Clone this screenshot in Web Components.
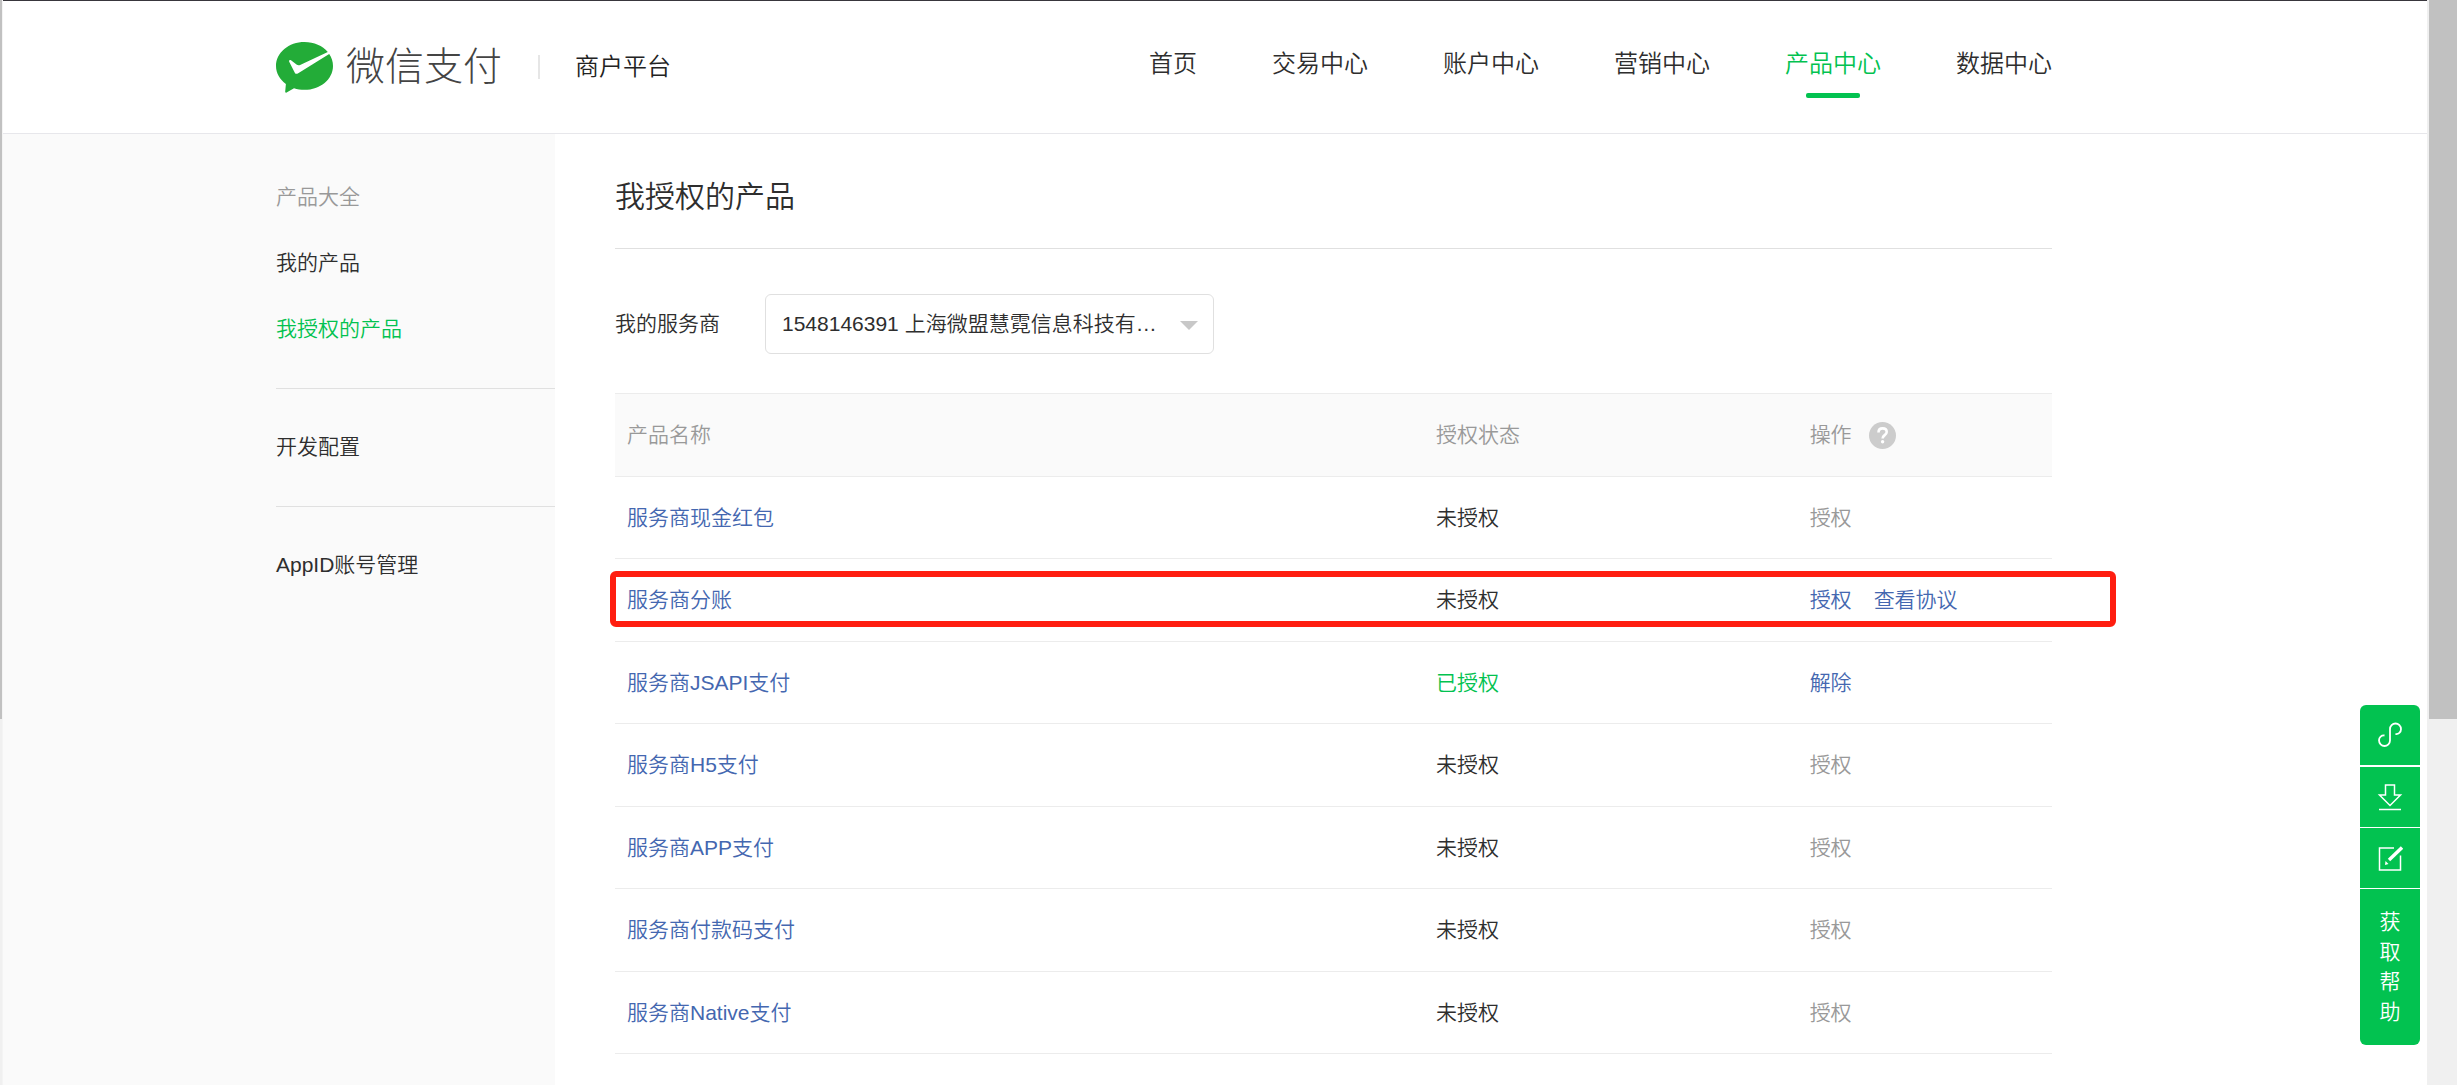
<!DOCTYPE html>
<html lang="zh-CN">
<head>
<meta charset="utf-8">
<meta name="viewport" content="width=device-width, initial-scale=1">
<title>微信支付 商户平台</title>
<style>
  :root {
    --green: #02c250;
    --link: #4467b0;
    --text: #2e2e2e;
    --muted: #999;
    --line: #e0e0e0;
    --soft: #ececec;
    --panel: #fafafa;
    --left: 273px;
    --right: 375px;
  }
  html, body { height: 100%; margin: 0; }
  body {
    background: #fff;
    color: var(--text);
    font: 350 21px/30px "Liberation Sans", "Noto Sans CJK SC", sans-serif;
    overflow: hidden;
  }
</style>
</head>
<body>
<pay-window>
  <pay-header>
    <pay-logo slot="brand"></pay-logo>
    <pay-nav-item>首页</pay-nav-item>
    <pay-nav-item>交易中心</pay-nav-item>
    <pay-nav-item>账户中心</pay-nav-item>
    <pay-nav-item>营销中心</pay-nav-item>
    <pay-nav-item active>产品中心</pay-nav-item>
    <pay-nav-item>数据中心</pay-nav-item>
  </pay-header>
  <pay-body>
    <pay-sidebar slot="side">
      <pay-side-group>
        <pay-side-item kind="muted">产品大全</pay-side-item>
        <pay-side-item>我的产品</pay-side-item>
        <pay-side-item kind="active">我授权的产品</pay-side-item>
      </pay-side-group>
      <pay-side-group>
        <pay-side-item>开发配置</pay-side-item>
      </pay-side-group>
      <pay-side-group>
        <pay-side-item>AppID账号管理</pay-side-item>
      </pay-side-group>
    </pay-sidebar>
    <pay-heading>我授权的产品</pay-heading>
    <pay-provider-select></pay-provider-select>
    <pay-product-table></pay-product-table>
  </pay-body>
</pay-window>
<pay-toolbar></pay-toolbar>

<script>
const define = (name, html, setup) => {
  const template = document.createElement('template');
  template.innerHTML = html;
  customElements.define(name, class extends HTMLElement {
    constructor() {
      super();
      this.attachShadow({ mode: 'open' }).append(template.content.cloneNode(true));
    }
    connectedCallback() {
      if (setup) setup(this, this.shadowRoot);
    }
  });
};

define('pay-window', `
  <style>
    :host { display: flex; height: 100vh; }
    .edge { flex: 0 0 2px; background: #f0f0f0; border-right: 1px solid #f4f4f4; }
    .page { flex: 1; min-width: 0; display: flex; flex-direction: column; border-top: 1px solid #38363c; box-sizing: border-box; }
    .track { flex: 0 0 28px; padding-left: 2px; background: #f0f0f0; }
    .thumb { height: 66.3%; background: #c1c1c1; }
  </style>
  <div class="edge"><div class="thumb"></div></div>
  <div class="page"><slot></slot></div>
  <div class="track"><div class="thumb"></div></div>
`);

define('pay-header', `
  <style>
    :host { display: block; border-bottom: 1px solid #e7e7eb; }
    header { display: flex; align-items: center; justify-content: space-between; height: 132px; padding: 0 var(--right) 0 var(--left); }
    nav { display: flex; align-items: flex-start; gap: 75px; }
  </style>
  <header><slot name="brand"></slot><nav><slot></slot></nav></header>
`);

define('pay-logo', `
  <style>
    :host { display: flex; align-items: center; }
    svg { width: 57px; height: 51px; margin-top: 1px; }
    .name { margin-left: 13px; font-size: 39px; line-height: 48px; font-weight: 300; color: #444; }
    .platform { margin-left: 36px; padding-left: 35px; font-size: 24px; line-height: 24px; color: #222; border-left: 2px solid #e6e6e6; }
  </style>
  <svg viewBox="0 0 57 51" aria-hidden="true">
    <path fill="#23ac38" d="M28.500 0C12.800 0 0 10.600 0 23.900c0 7.200 3.900 13.500 9.900 18L9.200 49.600c-.1 1 .6 1.400 1.400.9L18 46.300c3.300 1 6.800 1.500 10.500 1.500C44.200 47.800 57 37.200 57 23.900c0-4.500-1.300-8.500-3.800-12L21.800 31.400c-1.300.8-2.300.6-3-.7l-5.600-11c-.6-1.400.6-2.200 1.800-1.400l5.500 4.300c1.100.8 2.300 1 3.600.4L51.800 10C46.600 3.800 38.100 0 28.500 0z"/>
  </svg>
  <span class="name">微信支付</span>
  <span class="platform">商户平台</span>
`);

define('pay-nav-item', `
  <style>
    :host { display: block; }
    a { display: flex; flex-direction: column; align-items: center; gap: 14px; padding-top: 13px; font-size: 24px; line-height: 30px; color: inherit; text-decoration: none; }
    :host([active]) a { color: var(--green); }
    :host([active]) a::after { content: ""; width: 54px; height: 5px; border-radius: 2px; background: var(--green); }
  </style>
  <a href="#"><slot></slot></a>
`);

define('pay-body', `
  <style>
    :host { flex: 1; min-height: 0; display: flex; }
    main { flex: 1; min-width: 0; padding: 0 var(--right) 0 60px; }
  </style>
  <slot name="side"></slot>
  <main><slot></slot></main>
`);

define('pay-sidebar', `
  <style>
    :host { flex: 0 0 auto; width: 279px; padding: 5px 0 0 var(--left); background: var(--panel); }
  </style>
  <nav><slot></slot></nav>
`);

define('pay-side-group', `
  <style>
    :host { display: flex; flex-direction: column; gap: 36px; padding: 43px 0 44px; border-bottom: 1px solid var(--line); }
    :host(:last-child) { border-bottom: 0; }
  </style>
  <slot></slot>
`);

define('pay-side-item', `
  <style>
    :host { display: block; }
    a { display: block; color: inherit; text-decoration: none; }
    :host([kind="muted"]) a { color: var(--muted); }
    :host([kind="active"]) a { color: var(--green); }
  </style>
  <a href="#"><slot></slot></a>
`);

define('pay-heading', `
  <style>
    :host { display: block; border-bottom: 1px solid var(--line); }
    h1 { margin: 0; padding: 43px 0 31px; font-size: 30px; line-height: 40px; font-weight: 350; }
  </style>
  <h1><slot></slot></h1>
`);

define('pay-provider-select', `
  <style>
    :host { display: flex; align-items: center; gap: 45px; padding: 45px 0 39px; }
    .box { position: relative; }
    select {
      appearance: none; display: block; box-sizing: border-box; width: 449px; height: 60px; margin: 0;
      padding: 0 48px 0 16px; border: 1px solid var(--line); border-radius: 6px;
      background: #fff; color: inherit; font: inherit; text-overflow: ellipsis;
    }
    svg { position: absolute; right: 16px; top: 27px; width: 18px; height: 9px; pointer-events: none; }
  </style>
  <label for="provider">我的服务商</label>
  <div class="box">
    <select id="provider"><option>1548146391 上海微盟慧霓信息科技有…</option></select>
    <svg viewBox="0 0 18 9" aria-hidden="true"><path d="M0 0h18L9 9z" fill="#c8c8c8"/></svg>
  </div>
`);

const products = [
  { name: '服务商现金红包', state: '未授权', actions: ['授权'], locked: true },
  { name: '服务商分账', state: '未授权', actions: ['授权', '查看协议'], marked: true },
  { name: '服务商JSAPI支付', state: '已授权', actions: ['解除'], granted: true },
  { name: '服务商H5支付', state: '未授权', actions: ['授权'], locked: true },
  { name: '服务商APP支付', state: '未授权', actions: ['授权'], locked: true },
  { name: '服务商付款码支付', state: '未授权', actions: ['授权'], locked: true },
  { name: '服务商Native支付', state: '未授权', actions: ['授权'], locked: true }
];

define('pay-product-table', `
  <style>
    :host { display: block; }
    table { width: 100%; border-collapse: separate; border-spacing: 0; table-layout: fixed; }
    col.name { width: 56.3%; }
    col.state { width: 26%; }
    th, td { box-sizing: border-box; padding: 0 12px; text-align: left; font-weight: 350; border-bottom: 1px solid var(--soft); }
    th { height: 84px; color: var(--muted); background: var(--panel); border-top: 1px solid var(--soft); }
    tbody tr { position: relative; }
    td { height: 82px; }
    tr:nth-child(even) td { height: 83px; }
    .row { display: flex; align-items: center; gap: 22px; }
    .help { display: flex; align-items: center; gap: 17px; }
    a { color: var(--link); text-decoration: none; }
    button { padding: 0; border: 0; background: none; font: inherit; color: var(--link); cursor: pointer; }
    button:disabled { color: var(--muted); cursor: default; }
    .granted { color: var(--green); }
    .mark { position: absolute; top: 12px; bottom: 15px; left: -5px; right: -64px; border: 6px solid #ff1e10; border-radius: 6px; pointer-events: none; }
    svg { width: 27px; height: 27px; }
  </style>
  <table>
    <colgroup><col class="name"><col class="state"><col></colgroup>
    <thead>
      <tr>
        <th scope="col">产品名称</th>
        <th scope="col">授权状态</th>
        <th scope="col"><div class="help">操作
          <svg viewBox="0 0 27 27" aria-hidden="true">
            <circle cx="13.500" cy="13.500" r="13.500" fill="#ccc"/>
            <path d="M9.500 10.500c0-2.700 1.600-4.100 4.100-4.100s4.100 1.400 4.100 3.600c0 3.100-4.100 3.200-4.100 6.400" fill="none" stroke="#fff" stroke-width="2.600"/>
            <circle cx="13.600" cy="19.700" r="1.700" fill="#fff"/>
          </svg></div></th>
      </tr>
    </thead>
    <tbody></tbody>
  </table>
`, (host, root) => {
  root.querySelector('tbody').innerHTML = products.map(p => `
    <tr>
      <td><a href="#">${p.name}</a>${p.marked ? '<span class="mark"></span>' : ''}</td>
      <td class="${p.granted ? 'granted' : ''}">${p.state}</td>
      <td><div class="row">${p.actions.map(a => `<button type="button"${p.locked ? ' disabled' : ''}>${a}</button>`).join('')}</div></td>
    </tr>`).join('');
});

define('pay-toolbar', `
  <style>
    :host { position: fixed; right: 37px; bottom: 40px; width: 60px; display: flex; flex-direction: column; gap: 1px; border-radius: 6px; overflow: hidden; }
    button { display: flex; align-items: center; justify-content: center; width: 100%; height: 60px; margin: 0; padding: 0; border: 0; background: var(--green); color: #fff; font: inherit; }
    button:nth-child(3) { margin-top: 1px; }
    .help { height: 156px; padding: 0 19px; word-break: break-all; }
    svg { width: 26px; height: 28px; fill: none; stroke: #fff; stroke-width: 1.500; }
  </style>
  <button type="button" aria-label="link"><svg viewBox="0 0 26 28"><path stroke-width="1.800" d="M7.500 14.500C4.500 14 2 16.500 2 19.300 2 22.500 4.500 25 7.500 25s5.500-2.500 5.500-5.500V8c0-3 2.500-5.500 5.500-5.500S24 5 24 8.200c0 2.800-2.500 5.300-5.500 4.800"/></svg></button>
  <button type="button" aria-label="download"><svg viewBox="0 0 26 28"><path d="M8.500 2h9v10h6L13 22.500 2.500 12h6zM2 26.500h22"/></svg></button>
  <button type="button" aria-label="feedback"><svg viewBox="0 0 26 28"><path d="M17 4H2.500v22h21V11.500"/><path d="M12 16L25 3.500" stroke-width="3.400"/><path d="M8.500 17l3 3-3.500 1z" fill="#fff" stroke="none"/></svg></button>
  <button type="button" class="help">获取帮助</button>
`);
</script>
</body>
</html>
